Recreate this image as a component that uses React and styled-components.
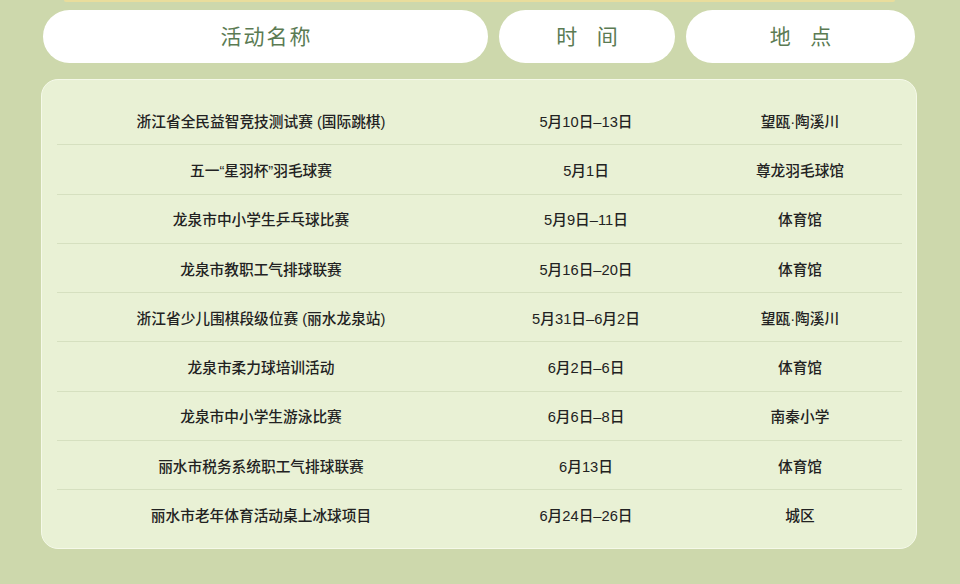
import styled, { createGlobalStyle } from 'styled-components'

const GlobalStyle = createGlobalStyle`
    html, body {
        margin: 0;
        padding: 0;
        background-color: #cdd8ac;
    }

    body {
        font-family: "Noto Sans CJK SC", "Noto Sans", sans-serif;
    }
`;

const Page = styled.div`
    width: 960px;
    height: 584px;
    overflow: hidden;
    background-color: #cdd8ac;
`;

const TopStrip = styled.div`
    height: 2px;
    margin: 0 65px 0 64px;
    background-color: #e9dd9c;
    border-radius: 0 0 4px 4px;
`;

const Wrapper = styled.div`
    width: 876px;
    margin-left: 41px;
`;

const Header = styled.div`
    display: grid;
    grid-template-columns: 445px 176px 229px;
    gap: 11px;
    padding: 8px 2px 0;
`;

const Pill = styled.div`
    height: 53px;
    border-radius: 27px;
    background-color: #ffffff;
    display: flex;
    align-items: center;
    justify-content: center;
    color: #5b7b53;
    font-size: 21px;
    font-weight: 400;
    letter-spacing: 2px;
    word-spacing: 11px;
    padding: 0 0 4px 2px;
    box-sizing: border-box;
`;

const Card = styled.div`
    margin-top: 16px;
    height: 470px;
    box-sizing: border-box;
    border: 1.5px solid #f5f9e9;
    border-radius: 17px;
    background-color: #e9f1d5;
    padding: 16px 14px 0 15px;
`;

const Row = styled.div`
    display: grid;
    grid-template-columns: 408px 242px 186px;
    align-items: center;
    height: 48.3px;
    border-bottom: 1px solid ${props => (props.last ? 'transparent' : '#d6e0c0')};
`;

const Cell = styled.div`
    text-align: center;
    font-family: "Liberation Sans", "Noto Sans CJK SC", sans-serif;
    font-size: 14.7px;
    font-weight: 500;
    color: #222222;
    white-space: nowrap;
`;

const huodong = [
    ['浙江省全民益智竞技测试赛 (国际跳棋)', '5月10日–13日', '望瓯·陶溪川'],
    ['五一“星羽杯”羽毛球赛', '5月1日', '尊龙羽毛球馆'],
    ['龙泉市中小学生乒乓球比赛', '5月9日–11日', '体育馆'],
    ['龙泉市教职工气排球联赛', '5月16日–20日', '体育馆'],
    ['浙江省少儿围棋段级位赛 (丽水龙泉站)', '5月31日–6月2日', '望瓯·陶溪川'],
    ['龙泉市柔力球培训活动', '6月2日–6日', '体育馆'],
    ['龙泉市中小学生游泳比赛', '6月6日–8日', '南秦小学'],
    ['丽水市税务系统职工气排球联赛', '6月13日', '体育馆'],
    ['丽水市老年体育活动桌上冰球项目', '6月24日–26日', '城区'],
];

function App() {
    return (
        <Page>
            <GlobalStyle />
            <TopStrip />
            <Wrapper>
                <Header>
                    <Pill>活动名称</Pill>
                    <Pill>时 间</Pill>
                    <Pill>地 点</Pill>
                </Header>
                <Card>
                    {huodong.map((item, i) => (
                        <Row key={i} last={i === huodong.length - 1}>
                            <Cell>{item[0]}</Cell>
                            <Cell>{item[1]}</Cell>
                            <Cell>{item[2]}</Cell>
                        </Row>
                    ))}
                </Card>
            </Wrapper>
        </Page>
    );
}

export default App;
